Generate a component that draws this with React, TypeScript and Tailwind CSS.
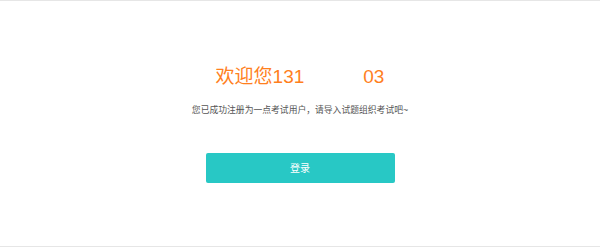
export default function App() {
  return (
    <div
      className="h-[247px] w-full bg-white border-t border-b border-[#e6e6e6] flex flex-col items-center pt-[64px]"
      style={{ fontFamily: '"Liberation Sans", "Noto Sans CJK SC", sans-serif' }}
    >
      <h1 className="h-[24px] text-[19px] leading-[24px] font-normal text-[#ff7f1e] whitespace-nowrap">
        欢迎您131<span className="ml-[59px]">03</span>
      </h1>
      <p className="mt-[14px] h-[14px] text-[8.8px] leading-[14px] text-[#555555] whitespace-nowrap">
        您已成功注册为一点考试用户，请导入试题组织考试吧~
      </p>
      <button className="mt-[36px] w-[189px] h-[30px] rounded-[2px] bg-[#28c8c5] text-white text-[10px] leading-[31px]">
        登录
      </button>
    </div>
  );
}
